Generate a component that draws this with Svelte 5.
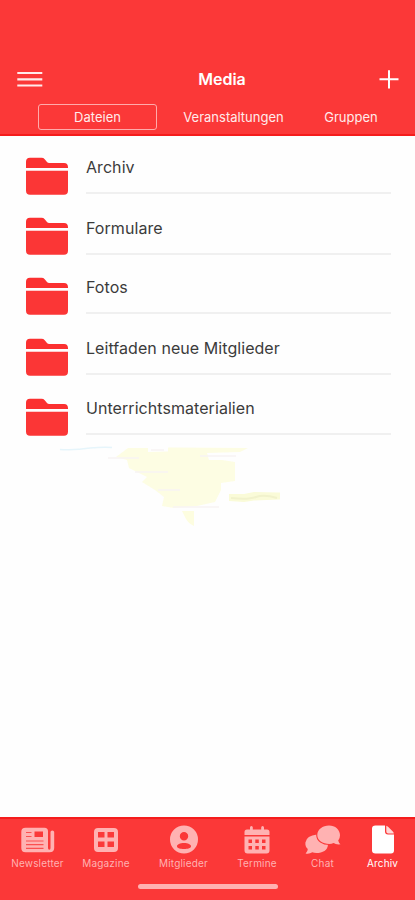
<script>
  const tabs = ['Dateien', 'Veranstaltungen', 'Gruppen'];
  let activeTab = $state('Dateien');
  const folders = ['Archiv', 'Formulare', 'Fotos', 'Leitfaden neue Mitglieder', 'Unterrichtsmaterialien'];
  const nav = ['Newsletter', 'Magazine', 'Mitglieder', 'Termine', 'Chat', 'Archiv'];
</script>

<div class="screen">
  <header>
    <div class="bar">
      <button class="icon" aria-label="Menu">
        <svg width="26" height="18" viewBox="0 0 26 18"><path d="M.3 2h25M.3 8.300h25M.3 14.500h25" stroke="#fff" stroke-opacity=".9" stroke-width="2.200" /></svg>
      </button>
      <h1>Media</h1>
      <button class="icon" aria-label="Neu">
        <svg width="20" height="20" viewBox="0 0 20 20"><path d="M10 .2v18.400M.5 9.300h19" stroke="#fff" stroke-width="2" /></svg>
      </button>
    </div>
    <div class="tabs">
      {#each tabs as tab}
        <button class="tab" class:active={tab === activeTab} onclick={() => (activeTab = tab)}>{tab}</button>
      {/each}
    </div>
  </header>

  <main>
    <ul>
      {#each folders as name}
        <li>
          <svg class="folder" width="42" height="38" viewBox="0 0 42 38">
            <path d="M0 11V4.800Q0 .8 4 .8H15.500q2 0 3.200 1.400l2.300 2.800q.8.900 2.200.9H38q4 0 4 4.400V11z" fill="#fb3030" />
            <path d="M0 13.700H42V33.700q0 4-4 4H4q-4 0-4-4z" fill="#fb3636" />
          </svg>
          <span>{name}</span>
        </li>
      {/each}
    </ul>
    <svg class="map" width="260" height="90" viewBox="0 0 260 90">
      <path d="M20 8.500q15 1 30-1.500 12-1 22-.5" fill="none" stroke="#e6f5fb" stroke-width="1.500" />
      <path d="M88 7h20v4l20-.5V6.500l80 .5-8 4-33 1 2 7h13l13 2v19l-14 2v7l-6 12-18 4-23 2-12-2 2-9-9-7-13-8 5-5-18-9-2-8-11-3z" fill="#fdfde3" />
      <path d="M142 70h12v15q-5-2-8-7z" fill="#fdfde0" />
      <path d="M189 53h15l10-2 26 .5v7l-26 1-10 1.500-15-1z" fill="#fafbd8" />
      <path d="M191 57q17 2 25-1t21 1" stroke="#f1f2cc" stroke-width="2" fill="none" />
      <path d="M68 17h31M95 31h33M111 9h13M118 49h22M160 15h36M133 66h46" stroke="#f7f4f4" stroke-width="1.300" fill="none" />
    </svg>
  </main>

  <footer>
    <nav>
      {#each nav as item, i}
        <a href="#{item}" class:current={i === 5}>
          {#if i === 0}
            <svg width="34" height="30" viewBox="0 0 34 30">
              <path d="M4.500 2.800h19q3.500 0 3.500 3.500V23q0 1.700 1.300 1.700T29.500 23V7q0-1.500 1.800-1.500T33.200 7v16q0 4.200-4.700 4.200H4.500q-4.200 0-4.200-4.200V7q0-4.200 4.200-4.200z" />
              <path d="M13.500 6.500H22V12h-8.500z" fill="#fb3838" />
              <path d="M5 7.500h5.500M5 11.500h5.500M5 16h17.500M5 19.700h17.500M5 23.400h17.500" stroke="#fb5050" stroke-width="1.200" />
            </svg>
          {:else if i === 1}
            <svg width="24" height="30" viewBox="0 0 24 30"><path fill-rule="evenodd" d="M4 3h16q4 0 4 4v16q0 4-4 4H4q-4 0-4-4V7q0-4 4-4zm0 4v5.500h6.500V7zm9.500 0v5.500H20V7zM4 16.500V22h6.500v-5.500zm9.500 0V22H20v-5.500z" /></svg>
          {:else if i === 2}
            <svg width="28" height="30" viewBox="0 0 28 30"><path fill-rule="evenodd" d="M14 .5a14 14 0 1 1 0 28 14 14 0 0 1 0-28zm0 6.500a4.200 4.200 0 1 0 0 8.400A4.200 4.200 0 0 0 14 7zm0 11c-4 0-7 1.400-7 3.200S10 24 14 24s7-1 7-2.800-3-3.200-7-3.200z" /></svg>
          {:else if i === 3}
            <svg width="26" height="30" viewBox="0 0 26 30">
              <path d="M.5 10V7q0-2.500 2.500-2.500h3V2.500Q6 1 7.400 1t1.400 1.500v2h8.400v-2Q17.200 1 18.600 1T20 2.500v2h3q2.500 0 2.500 2.500v3z" />
              <path fill-rule="evenodd" d="M.5 11.500h25v14q0 3-3 3h-19q-3 0-3-3zm4 3V18H8v-3.500zm6.800 0V18h3.500v-3.500zm6.700 0V18h3.500v-3.500zM4.500 21v3.500H8V21zm6.800 0v3.500h3.500V21zm6.700 0v3.500h3.500V21z" />
            </svg>
          {:else if i === 4}
            <svg width="36" height="30" viewBox="0 0 36 30">
              <path d="M12 9.500C17 9 23 12.500 23 19S17.500 28 11.500 28q-2.500 0-4.200-.7Q4.500 29.200.6 28.500q2.200-2.200 2.200-4.500Q0 21.500.4 17.500 1.500 10.500 12 9.500z" />
              <path d="M24 .5c6.200 0 11 4.200 11 9.800q0 3.200-1.800 5.200.5 2.200 2.300 3.800-4.500.5-6.900-1.200-2 .9-4.300.9c-6.500 0-12-3.500-12-9S17.700.5 24 .5z" stroke="#fb3838" stroke-width="2.200" paint-order="stroke" />
            </svg>
          {:else}
            <svg width="22" height="30" viewBox="0 0 22 30">
              <path d="M3.500.5H13v6q0 3 3 3h6v16q0 3-3 3H3.500q-3.500 0-3.500-3V3.500q0-3 3.500-3z" />
              <path d="M14.300.8q1 .2 2 1.200l4.500 4.500q1 1 1 1.900h-5.500q-2 0-2-2z" fill="#ffd8d8" />
            </svg>
          {/if}
          <span>{item}</span>
        </a>
      {/each}
    </nav>
    <div class="home"></div>
  </footer>
</div>

<style>
  :global(body) { margin: 0; }
  .screen { height: 900px; width: 415px; display: flex; flex-direction: column; background: #fefefe; font-family: Inter, "Liberation Sans", sans-serif; overflow: hidden; }
  button { border: 0; background: none; padding: 0; margin: 0; font: inherit; color: inherit; }
  header { height: 136px; box-sizing: border-box; padding-top: 66px; background: #fb3838; color: #fff; border-bottom: 2px solid #f51c1c; }
  .bar { display: flex; align-items: center; justify-content: space-between; height: 27px; padding: 0 16px 0 17px; }
  .icon, .icon svg { display: block; }
  h1 { margin: 0 0 0 22px; font-size: 16px; font-weight: 600; line-height: 27px; }
  .tabs { display: flex; align-items: center; margin: 11px 0 0 38px; height: 26px; }
  .tab { box-sizing: border-box; height: 26px; font-size: 13px; line-height: 25px; text-align: center; border: 1px solid transparent; width: 119px; white-space: nowrap; color: #ffebeb; }
  .tab:nth-child(2) { width: 153px; }
  .tab:nth-child(3) { width: 82px; }
  .tab.active { border-color: #ffabab; border-radius: 3px; }
  main { flex: 1; }
  ul { list-style: none; margin: 0; padding: 15px 24px 0 26px; }
  li { display: flex; height: 60.200px; gap: 18px; }
  .folder { flex: none; margin-top: 6px; }
  li span { flex: 1; height: 43px; box-sizing: border-box; padding-top: 5px; line-height: 22px; font-size: 16px; letter-spacing: .06px; color: #3b3b3b; border-bottom: 2px solid #f0f0f0; }
  li:nth-child(2) span { height: 44px; padding-top: 6px; }
  .map { display: block; margin: -11px 0 0 40px; }
  footer { height: 83px; box-sizing: border-box; background: #fb3838; border-top: 2px solid #f51c1c; }
  nav { display: grid; grid-template-columns: 69px 68px 87px 60px 71px 49px; padding: 6px 8px 0 3px; height: 59px; }
  a { display: flex; flex-direction: column; align-items: center; color: #ffb2b2; text-decoration: none; font-size: 10px; line-height: 14px; }
  a svg { fill: currentColor; display: block; }
  a span { margin-top: 1px; white-space: nowrap; letter-spacing: .18px; }
  .current { color: #fff; }
  .home { width: 140px; height: 5px; border-radius: 3px; background: #ffb0b0; margin: 0 auto; }
</style>
